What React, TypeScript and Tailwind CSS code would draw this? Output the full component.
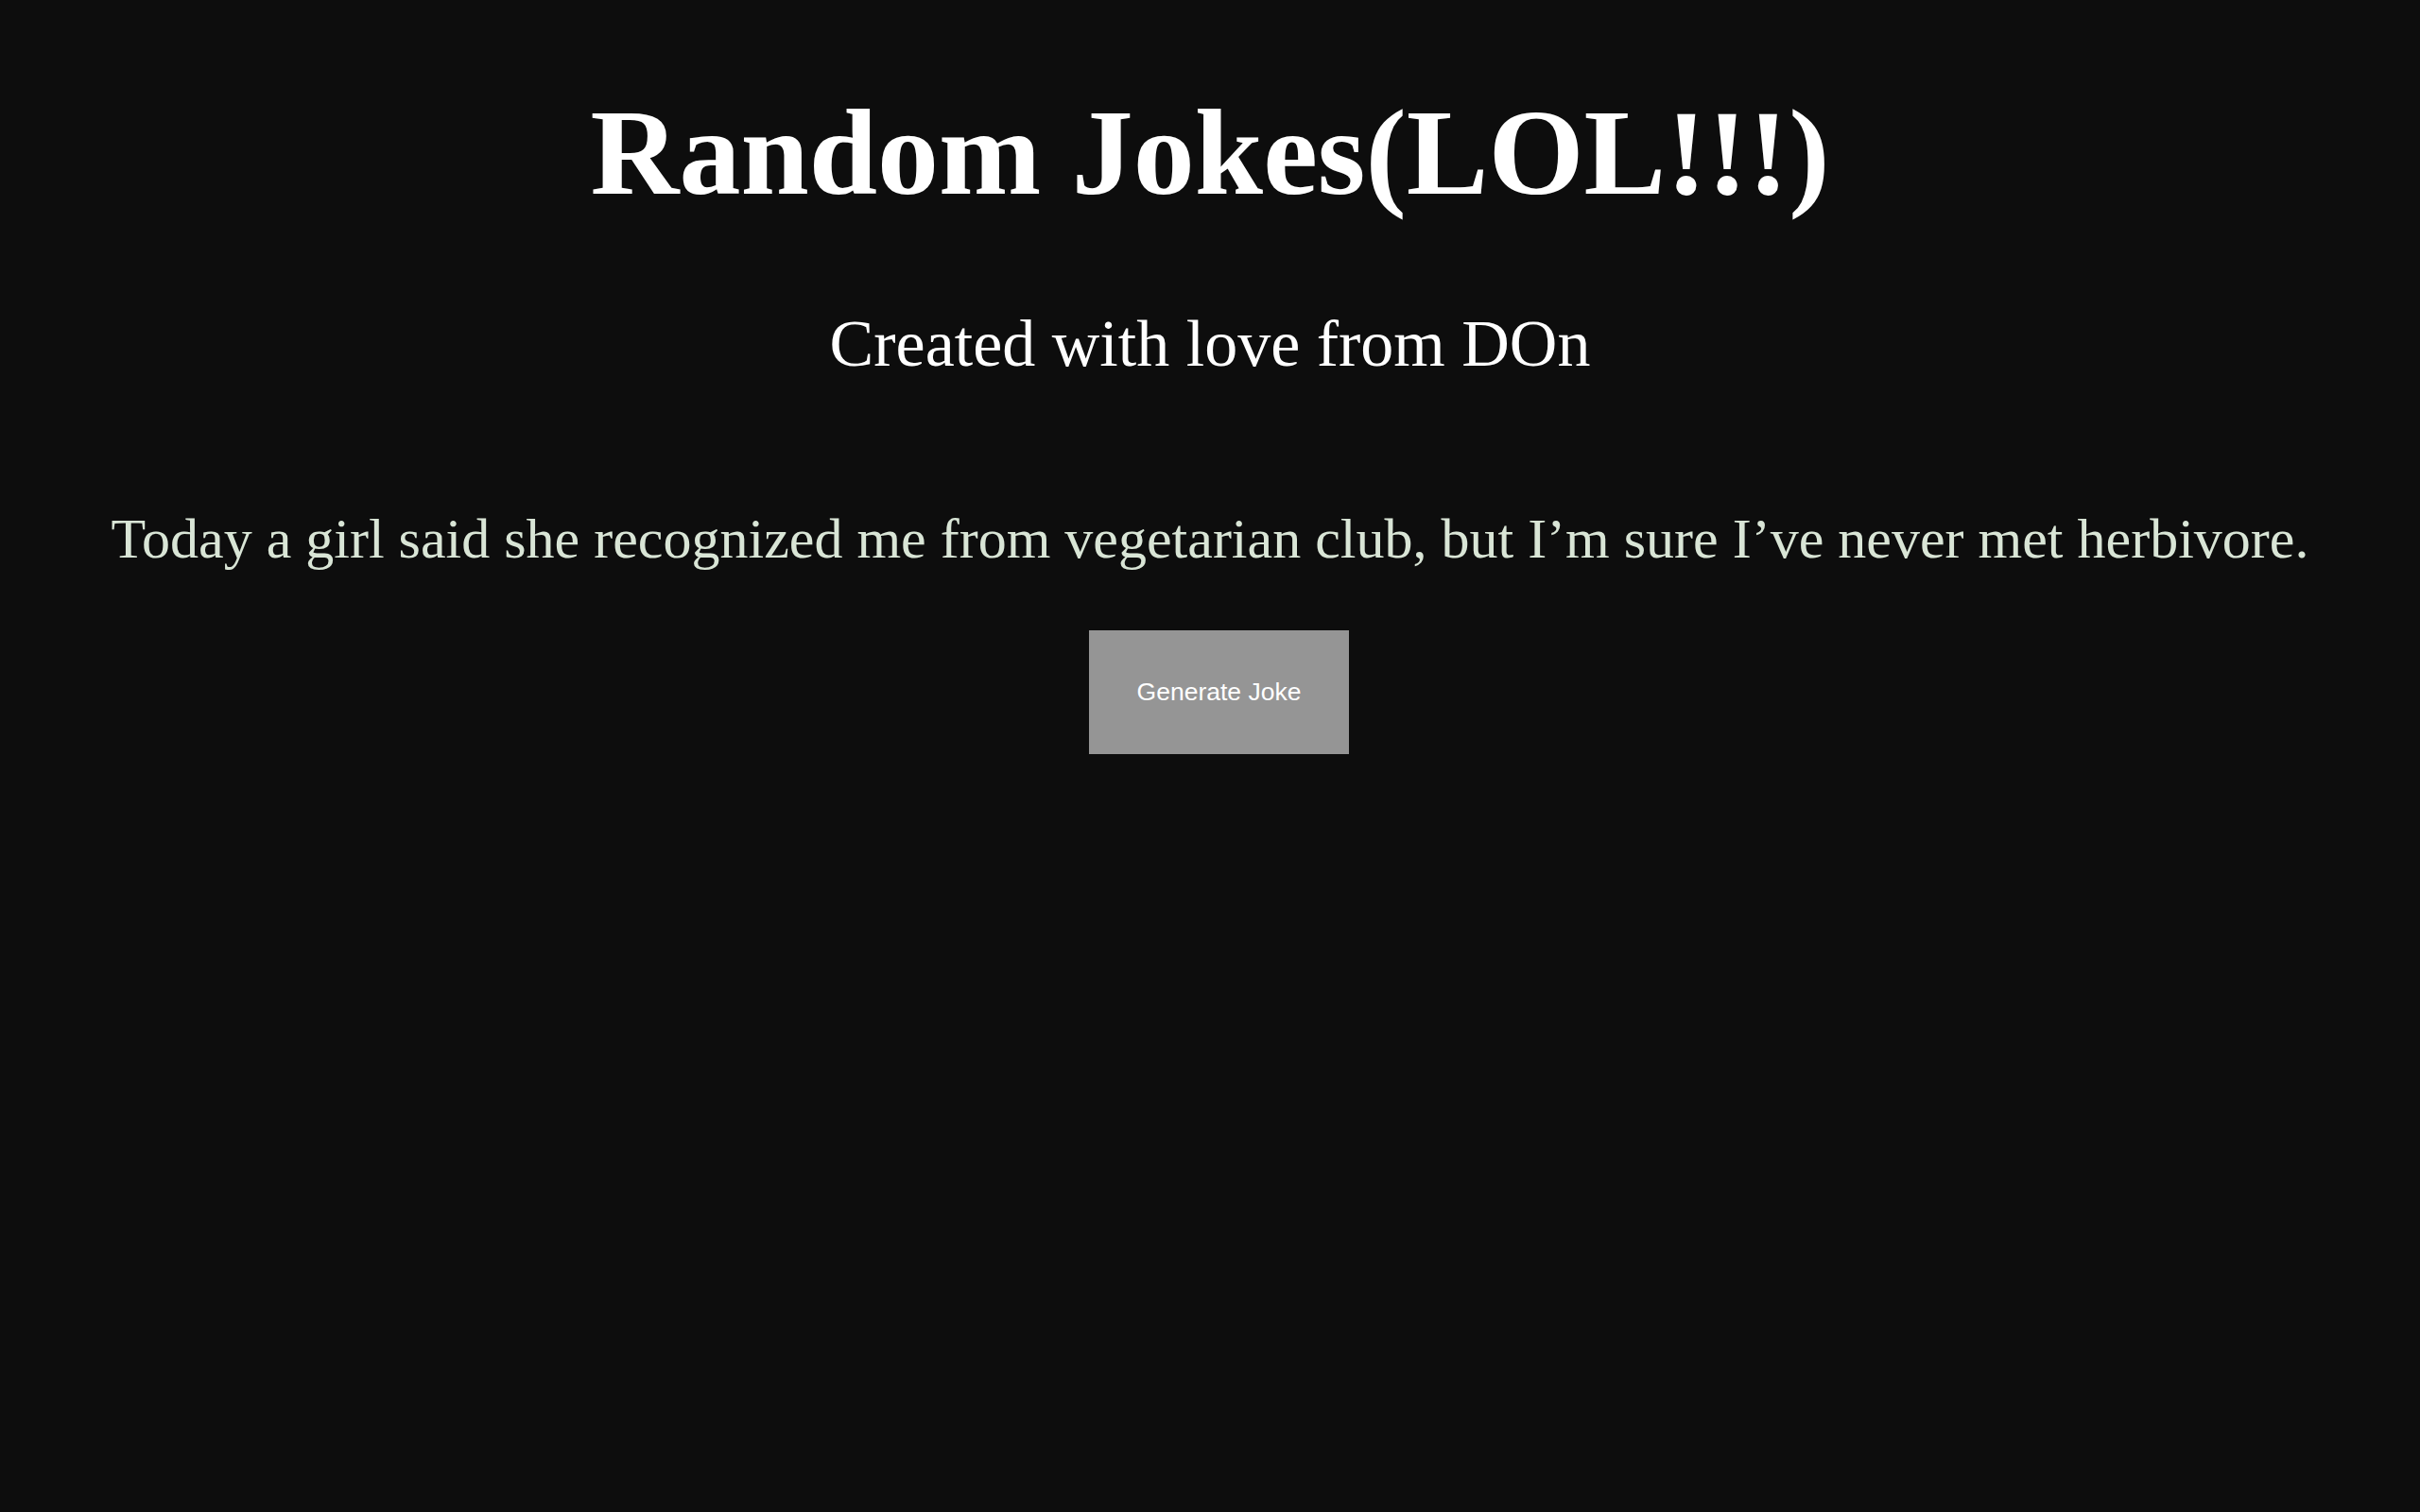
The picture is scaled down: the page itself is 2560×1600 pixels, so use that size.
export default function App() {
  return (
    <div className="min-h-screen w-full bg-[#0d0d0d] flex flex-col items-center pt-[96px] font-['Liberation_Serif',serif]">
      <h1 className="text-[130px] leading-none font-bold text-white whitespace-nowrap">Random Jokes(LOL!!!)</h1>
      <h2 className="mt-[103px] text-[70px] leading-none text-white whitespace-nowrap">Created with love from DOn</h2>
      <p className="mt-[141px] text-[60px] leading-none text-[#d9e5d6] whitespace-nowrap">
        Today a girl said she recognized me from vegetarian club, but I’m sure I’ve never met herbivore.
      </p>
      <button className="mt-[67px] ml-[19px] bg-[#959595] text-white text-[26.5px] leading-[31px] px-[51px] py-[50px] font-['Liberation_Sans',sans-serif]">
        Generate Joke
      </button>
    </div>
  );
}
